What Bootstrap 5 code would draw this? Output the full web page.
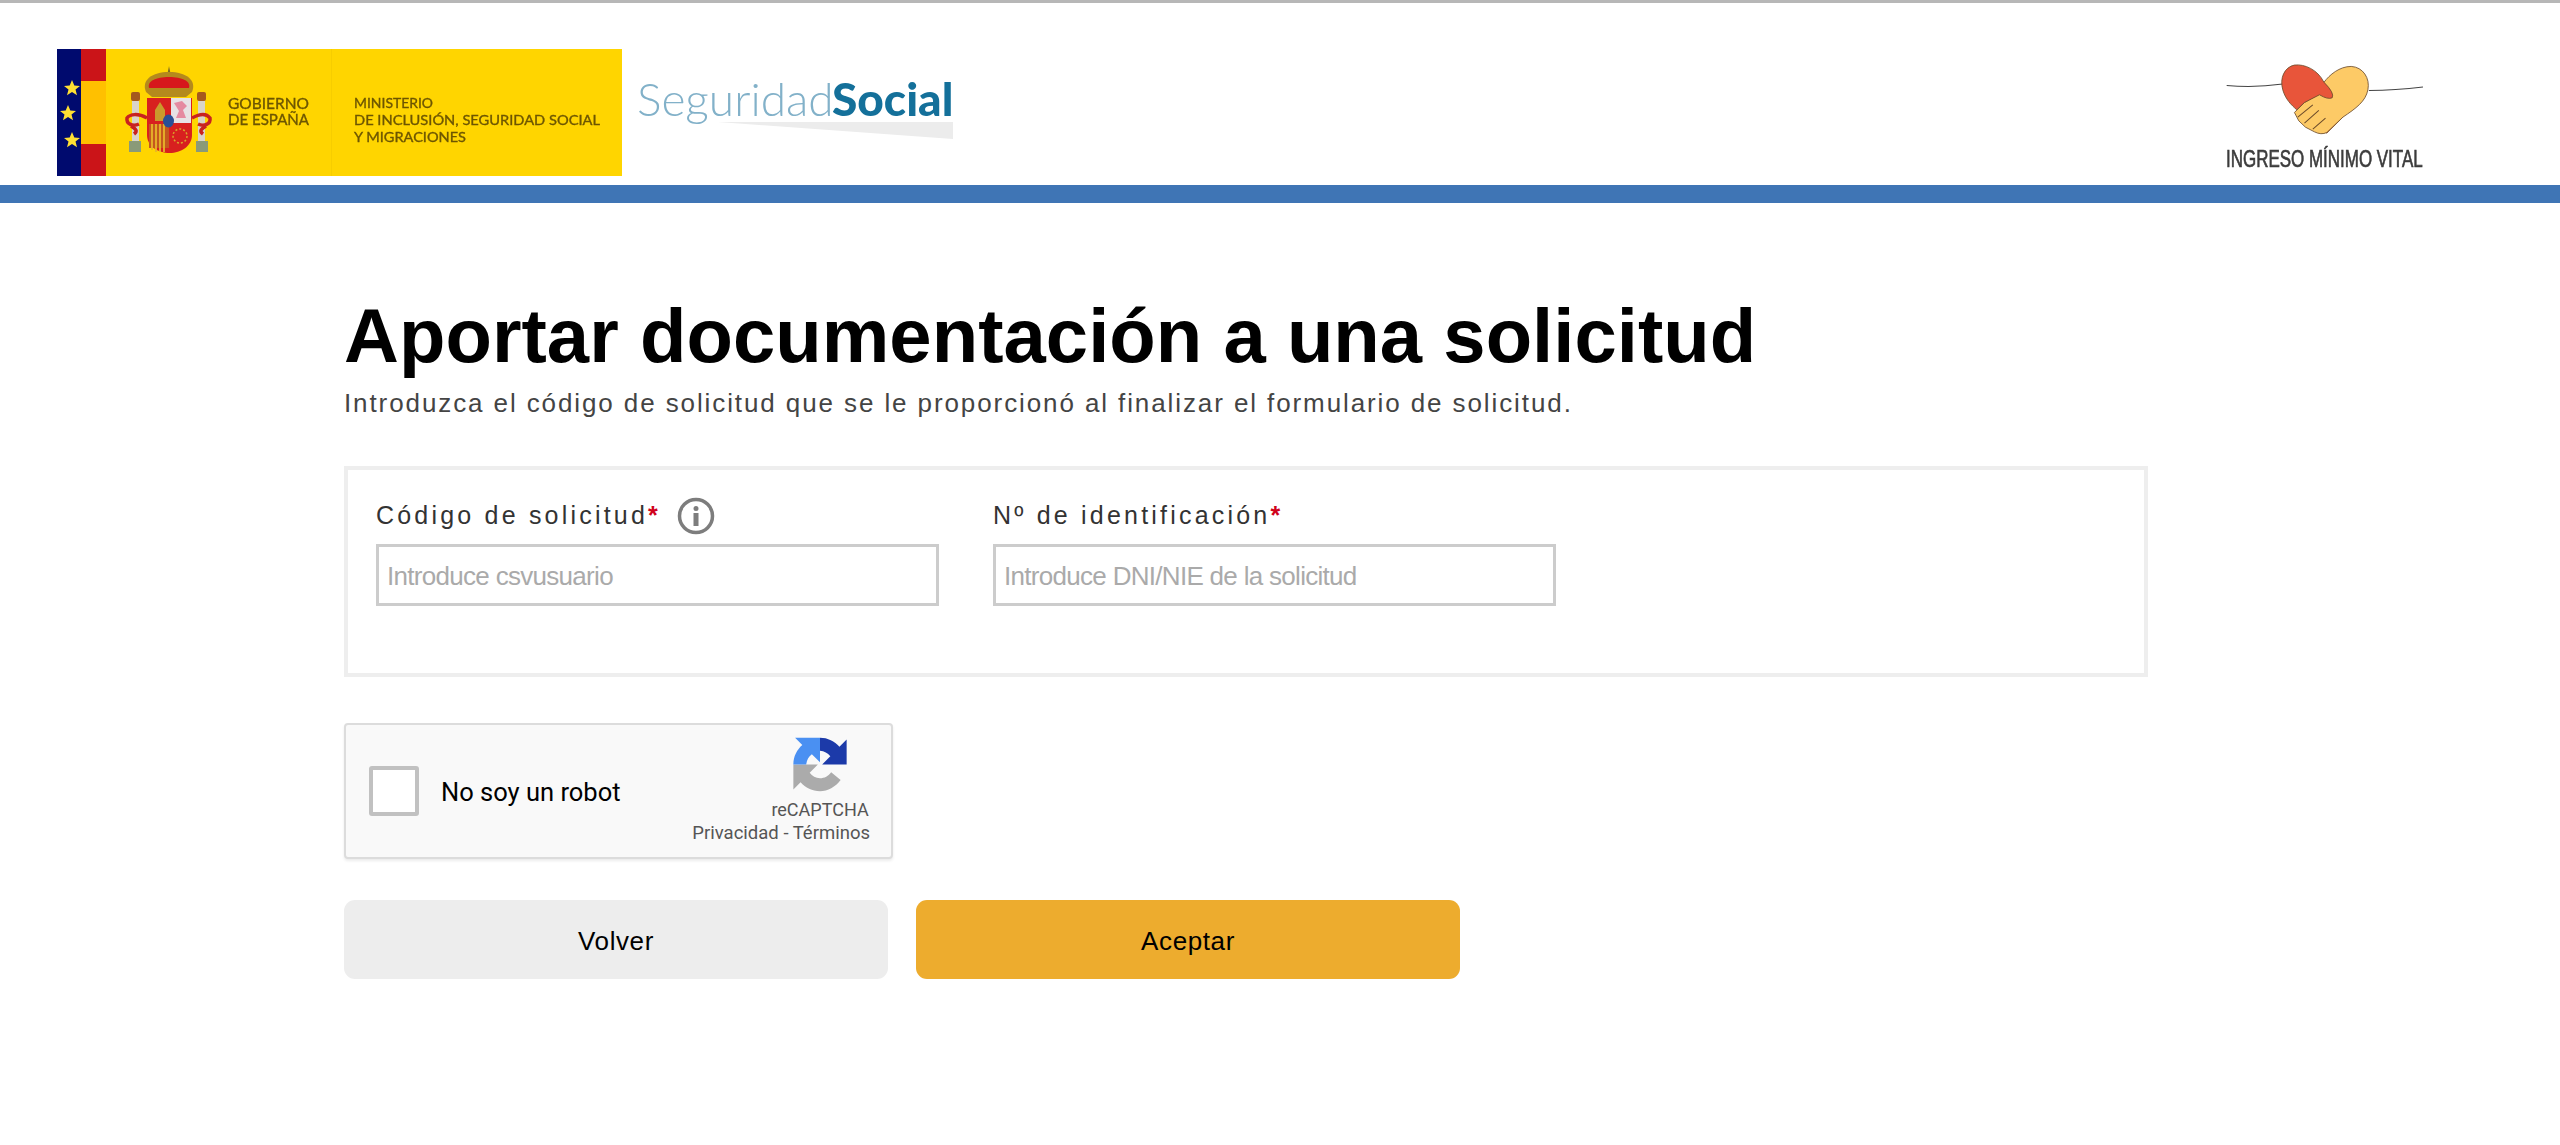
<!DOCTYPE html>
<html lang="es">
<head>
    <meta charset="UTF-8" />
    <meta name="viewport" content="width=device-width, initial-scale=1.0" />
    <title>Ingreso Mínimo Vital - Aportar documentación</title>
    <link href="https://cdn.jsdelivr.net/npm/bootstrap@5.3.0/dist/css/bootstrap.min.css" rel="stylesheet">
    <style>
        body {
            font-family: "Liberation Sans", Arial, sans-serif;
            background: #fff;
            color: #000;
        }
        .top-strip { height: 3px; background: #b7b7b7; }
        .site-head { height: 182px; padding: 46px 137px 0 57px; }
        .gov-logo { width: 565px; height: 127px; filter: blur(.6px); }
        .ss-logo { width: 320px; height: 80px; margin: 13px 0 0 15px; filter: blur(.5px); }
        .imv-logo { width: 197px; height: 112px; margin-top: 14px; filter: blur(.3px); }
        .blue-band { height: 18px; background: #3f75b5; }

        .page-main { width: 1804px; margin-left: 344px; padding-top: 89px; }
        .page-title {
            font-size: 76px;
            font-weight: 700;
            line-height: 88px;
            letter-spacing: .05px;
            margin: 0;
        }
        .page-sub {
            font-size: 26px;
            line-height: 32px;
            letter-spacing: 1.9px;
            color: #444;
            margin: 7px 0 0;
        }
        .form-box {
            height: 211px;
            margin-top: 47px;
            padding: 28px 28px 0;
            border: 4px solid #eee;
            gap: 54px;
        }
        .field-box { width: 563px; }
        .field-label {
            height: 36px;
            font-size: 25px;
            letter-spacing: 3.2px;
            color: #333;
            margin: 0 0 10px;
        }
        .req-mark { color: #d0021b; font-weight: 700; letter-spacing: 0; }
        .info-icon { width: 38px; height: 38px; margin-left: 19px; }
        .form-box .form-control {
            height: 62px;
            border: 3px solid #ccc;
            border-radius: 0;
            padding: 2px 8px 0;
            font-size: 26px;
            letter-spacing: -.7px;
        }
        .form-box .form-control::placeholder { color: #aaa; }

        .captcha-box {
            width: 549px;
            height: 136px;
            margin-top: 46px;
            padding: 0 21px 0 23px;
            background: #f9f9f9;
            border: 2px solid #dcdcdc;
            border-radius: 4px;
            box-shadow: 0 2px 3px rgba(0,0,0,.08);
            font-family: Roboto, "Liberation Sans", sans-serif;
        }
        .captcha-box .form-check-input {
            width: 50px;
            height: 50px;
            border: 4px solid #c1c1c1;
            border-radius: 3px;
            background-color: #fff;
        }
        .captcha-text { font-size: 25.5px; margin: 2px 0 0 22px; color: #000; }
        .captcha-side { color: #555; padding-top: 12px; }
        .captcha-brand { width: 100px; margin-left: auto; text-align: center; }
        .captcha-logo { width: 56px; height: 55px; display: block; margin: 0 auto; }
        .captcha-name { font-size: 18px; line-height: 22px; margin-top: 7px; }
        .captcha-links { font-size: 18.5px; line-height: 24px; }

        .action-row { margin-top: 41px; gap: 28px; }
        .act-btn {
            width: 544px;
            height: 79px;
            border: 0;
            border-radius: 11px;
            padding-top: 9px;
            font-size: 26px;
            letter-spacing: .6px;
            color: #000;
        }
        .act-back { background: #ededed; }
        .act-ok { background: #edac2e; }
        .act-back:hover, .act-back:active { background: #e2e2e2; color: #000; }
        .act-ok:hover, .act-ok:active { background: #e0a020; color: #000; }
    </style>
</head>
<body>

    <div class="top-strip"></div>

    <header class="site-head d-flex align-items-start">
        <!-- coords in the logo svg are page px, easier to check against the screenshot -->
        <svg class="gov-logo" viewBox="57 49 565 127" role="img" aria-label="Gobierno de España">
            <rect x="57" y="49" width="565" height="127" fill="#ffd500"/>
            <rect x="57" y="49" width="24" height="127" fill="#000a6e"/>
            <rect x="81" y="49" width="25" height="127" fill="#cb1418"/>
            <rect x="81" y="81" width="25" height="63" fill="#ffc000"/>
            <rect x="331" y="49" width="1" height="127" fill="#f7cd00"/>
            <g fill="#ffe033">
                <polygon points="72,80 74.3,85.6 80,85.9 75.5,89.6 77,95.2 72,92.1 67,95.2 68.5,89.6 64,85.9 69.7,85.6"/>
                <polygon points="68,105 70.3,110.6 76,110.9 71.5,114.6 73,120.2 68,117.1 63,120.2 64.5,114.6 60,110.9 65.7,110.6"/>
                <polygon points="72,132 74.3,137.6 80,137.9 75.5,141.6 77,147.2 72,144.1 67,147.2 68.5,141.6 64,137.9 69.7,137.6"/>
            </g>
            <!-- columns -->
            <g>
                <rect x="131" y="92" width="9" height="9" rx="2" fill="#a5581e"/>
                <rect x="132" y="101" width="7" height="40" fill="#d9d4c9"/>
                <rect x="129" y="141" width="12" height="11" fill="#8a9a78"/>
                <rect x="197" y="92" width="9" height="9" rx="2" fill="#a5581e"/>
                <rect x="198" y="101" width="7" height="40" fill="#d9d4c9"/>
                <rect x="196" y="141" width="12" height="11" fill="#8a9a78"/>
            </g>
            <!-- ribbons -->
            <path d="M147 118 C138 113 130 114 127 118 C126 124 133 127 139 124 M131 126 C136 129 138 131 134 134" fill="none" stroke="#c9221f" stroke-width="3.5"/>
            <path d="M192 118 C201 113 207 114 210 118 C211 124 204 127 198 124 M206 126 C201 129 199 131 203 134" fill="none" stroke="#c9221f" stroke-width="3.5"/>
            <!-- crown -->
            <path d="M169 66 L171 76 L167 76 Z" fill="#7d6a20"/>
            <path d="M146 92 C141 80 152 72 169 72 C186 72 197 80 192 92 L186 97 L152 97 Z" fill="#b48a1d"/>
            <path d="M149 88 C147 81 156 77 169 77 C182 77 191 81 189 88 Z" fill="#d7171c"/>
            <!-- shield -->
            <path d="M147 98 H192 V135 C192 146 181 153 169.500 153 C158 153 147 146 147 135 Z" fill="#d8201f"/>
            <rect x="171" y="98" width="20" height="25" fill="#e7e2e4"/>
            <path d="M174 103 L182 101 L187 106 L183 110 L186 118 L176 118 L179 111 Z" fill="#e58aa0"/>
            <path d="M160 102 L165 110 V121 H155 V110 Z" fill="#c99a2c"/>
            <rect x="149" y="124" width="20" height="24" fill="#c5571e"/>
            <path d="M152 124 V150 M156 124 V152 M160 124 V152 M164 124 V152" stroke="#e7b52a" stroke-width="1.800"/>
            <circle cx="180" cy="136" r="7" fill="none" stroke="#d9a42a" stroke-width="1.500" stroke-dasharray="2 2"/>
            <ellipse cx="168.500" cy="121" rx="5.500" ry="6.500" fill="#2a4f95"/>
            <g fill="#6d5600" stroke="#6d5600" stroke-width=".35" font-family="Lato, 'Liberation Sans', sans-serif">
                <text x="228" y="109" font-size="15" textLength="81" lengthAdjust="spacingAndGlyphs">GOBIERNO</text>
                <text x="228" y="125" font-size="15" textLength="81" lengthAdjust="spacingAndGlyphs">DE ESPAÑA</text>
                <text x="354" y="108" font-size="14" textLength="79" lengthAdjust="spacingAndGlyphs">MINISTERIO</text>
                <text x="354" y="125" font-size="14" textLength="246" lengthAdjust="spacingAndGlyphs">DE INCLUSIÓN, SEGURIDAD SOCIAL</text>
                <text x="354" y="142" font-size="14" textLength="112" lengthAdjust="spacingAndGlyphs">Y MIGRACIONES</text>
            </g>
        </svg>

        <svg class="ss-logo" viewBox="637 60 320 80" role="img" aria-label="Seguridad Social">
            <polygon points="718,120 953,120 953,137" fill="#ececec"/>
            <text x="637" y="114" font-family="Lato, 'Liberation Sans', sans-serif" font-size="46" font-weight="300" fill="#82b1c9">Seguridad</text>
            <text x="832" y="114" font-family="Lato, 'Liberation Sans', sans-serif" font-size="46" font-weight="900" fill="#14709a">Social</text>
        </svg>

        <svg class="imv-logo ms-auto" viewBox="140 70 590 335" role="img" aria-label="Ingreso Mínimo Vital">
            <path d="M142 137 C190 142 260 140 310 133" fill="none" stroke="#444" stroke-width="3"/>
            <path d="M568 152 C620 152 680 148 730 142" fill="none" stroke="#444" stroke-width="3"/>
            <path d="M400 200 L490 232 L442 280 L400 250 Z" fill="#e8553a" stroke="#6b4a2a" stroke-width="2"/>
            <path d="M433 128 C450 105 480 80 515 80 C550 82 572 115 565 150 C558 185 530 205 490 232 L442 278 Q425 286 405 276 L378 262 L358 243 L345 218 L375 188 L420 162 Z" fill="#fdca66" stroke="#6b4a2a" stroke-width="2.500"/>
            <path d="M433 127 C415 90 375 72 345 76 C315 82 300 115 310 150 C318 178 335 195 352 210 L375 188 L420 165 Q445 180 458 174 Q466 160 433 127 Z" fill="#e8553a" stroke="#6b4a2a" stroke-width="2.500"/>
            <path d="M355 232 L400 195 M375 250 L418 212 M400 268 L438 235" fill="none" stroke="#6b4a2a" stroke-width="3"/>
            <text transform="translate(140 380) scale(.7266 1)" font-family="'Liberation Sans', sans-serif" font-size="70" fill="#3c3c3c" stroke="#3c3c3c" stroke-width="2">INGRESO MÍNIMO VITAL</text>
        </svg>
    </header>

    <div class="blue-band"></div>

    <main class="page-main">
        <h1 class="page-title">Aportar documentación a una solicitud</h1>
        <p class="page-sub">Introduzca el código de solicitud que se le proporcionó al finalizar el formulario de solicitud.</p>

        <form>
            <div class="form-box d-flex align-items-start">
                <div class="field-box">
                    <label class="field-label d-flex align-items-center" for="codigo">
                        <span>Código de solicitud<span class="req-mark">*</span></span>
                        <svg class="info-icon" viewBox="0 0 38 38" aria-hidden="true">
                            <circle cx="19" cy="19" r="16.500" fill="none" stroke="#7d7d7d" stroke-width="3.500"/>
                            <circle cx="19" cy="11.500" r="2.500" fill="#7d7d7d"/>
                            <rect x="16.500" y="16" width="5" height="13" fill="#7d7d7d"/>
                        </svg>
                    </label>
                    <input type="text" class="form-control" id="codigo" placeholder="Introduce csvusuario">
                </div>
                <div class="field-box">
                    <label class="field-label d-flex align-items-center" for="identificacion">
                        <span>Nº de identificación<span class="req-mark">*</span></span>
                    </label>
                    <input type="text" class="form-control" id="identificacion" placeholder="Introduce DNI/NIE de la solicitud">
                </div>
            </div>

            <div class="captcha-box d-flex align-items-center">
                <input class="form-check-input m-0" type="checkbox" id="robot">
                <label class="captcha-text" for="robot">No soy un robot</label>
                <div class="captcha-side ms-auto align-self-start">
                    <div class="captcha-brand">
                        <svg class="captcha-logo" viewBox="0 0 64 64" aria-hidden="true">
                            <path d="M32 48 C37 48 42 45.500 45 41 L56 50 C50 58 41 63 32 63 Z" fill="#ababab"/>
                            <path transform="rotate(180 32 32)" d="M32 1 C41 1 49 5 54.600 11.400 L63 3 V32 H34.500 L44 22.500 C41 18.500 37 16.500 32 16 Z" fill="#ababab"/>
                            <path transform="rotate(-90 32 32)" d="M32 1 C41 1 49 5 54.600 11.400 L63 3 V32 H34.500 L44 22.500 C41 18.500 37 16.500 32 16 Z" fill="#4a90f2"/>
                            <path d="M32 1 C41 1 49 5 54.600 11.400 L63 3 V32 H34.500 L44 22.500 C41 18.500 37 16.500 32 16 Z" fill="#1c3aa9"/>
                        </svg>
                        <div class="captcha-name">reCAPTCHA</div>
                    </div>
                    <div class="captcha-links">Privacidad - Términos</div>
                </div>
            </div>

            <div class="action-row d-flex">
                <button type="button" class="btn act-btn act-back">Volver</button>
                <button type="button" class="btn act-btn act-ok">Aceptar</button>
            </div>
        </form>
    </main>

    <script src="https://cdn.jsdelivr.net/npm/bootstrap@5.3.0/dist/js/bootstrap.bundle.min.js"></script>
</body>
</html>
